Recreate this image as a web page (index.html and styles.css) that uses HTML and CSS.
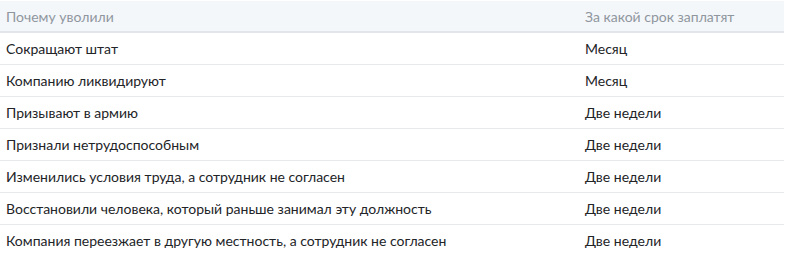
FILE: index.html
```html
<!DOCTYPE html>
<html lang="ru">
<head>
<meta charset="utf-8">
<link rel="stylesheet" href="styles.css">
</head>
<body>
<table class="pay-table">
  <thead>
    <tr><th class="col-reason">Почему уволили</th><th class="col-term">За какой срок заплатят</th></tr>
  </thead>
  <tbody>
    <tr><td>Сокращают штат</td><td>Месяц</td></tr>
    <tr><td>Компанию ликвидируют</td><td>Месяц</td></tr>
    <tr><td>Призывают в армию</td><td>Две недели</td></tr>
    <tr><td>Признали нетрудоспособным</td><td>Две недели</td></tr>
    <tr><td>Изменились условия труда, а сотрудник не согласен</td><td>Две недели</td></tr>
    <tr><td>Восстановили человека, который раньше занимал эту должность</td><td>Две недели</td></tr>
    <tr><td>Компания переезжает в другую местность, а сотрудник не согласен</td><td>Две недели</td></tr>
  </tbody>
</table>
</body>
</html>
```
FILE: styles.css
```css
html, body {
  margin: 0;
  padding: 0;
  background: #ffffff;
}
body {
  padding-top: 1px;
  font-family: Lato, "Noto Sans", sans-serif;
  font-size: 14px;
  color: #222427;
}
.pay-table {
  width: 784px;
  border-collapse: collapse;
}
.pay-table th,
.pay-table td {
  height: 31px;
  padding: 0 6px;
  text-align: left;
  vertical-align: middle;
  border-bottom: 1px solid #e7eaed;
  line-height: 17px;
}
.pay-table th {
  background: #f4f7fa;
  font-weight: normal;
  color: #8f969e;
  border-bottom: 2px solid #e2e6ea;
  height: 30px;
}
.pay-table tbody tr:last-child td {
  border-bottom: none;
}
.col-reason {
  width: 567px;
}
```
